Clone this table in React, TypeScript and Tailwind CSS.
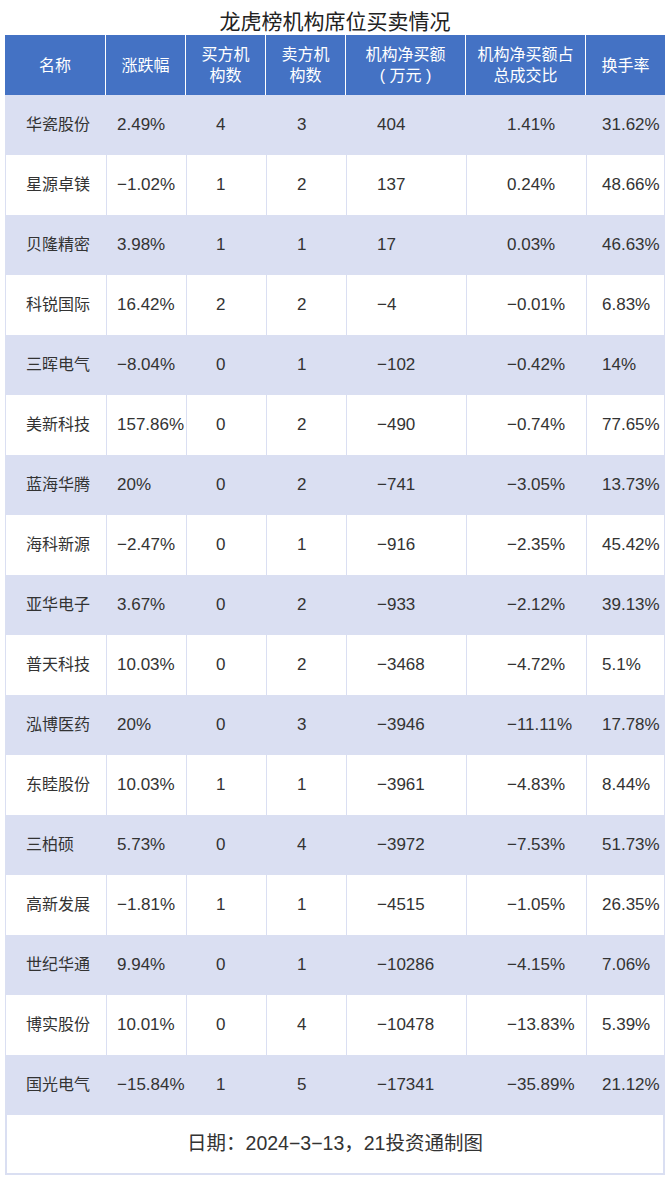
const rows: [string, string, string, string, string, string, string][] = [
  ["华瓷股份", "2.49%", "4", "3", "404", "1.41%", "31.62%"],
  ["星源卓镁", "−1.02%", "1", "2", "137", "0.24%", "48.66%"],
  ["贝隆精密", "3.98%", "1", "1", "17", "0.03%", "46.63%"],
  ["科锐国际", "16.42%", "2", "2", "−4", "−0.01%", "6.83%"],
  ["三晖电气", "−8.04%", "0", "1", "−102", "−0.42%", "14%"],
  ["美新科技", "157.86%", "0", "2", "−490", "−0.74%", "77.65%"],
  ["蓝海华腾", "20%", "0", "2", "−741", "−3.05%", "13.73%"],
  ["海科新源", "−2.47%", "0", "1", "−916", "−2.35%", "45.42%"],
  ["亚华电子", "3.67%", "0", "2", "−933", "−2.12%", "39.13%"],
  ["普天科技", "10.03%", "0", "2", "−3468", "−4.72%", "5.1%"],
  ["泓博医药", "20%", "0", "3", "−3946", "−11.11%", "17.78%"],
  ["东睦股份", "10.03%", "1", "1", "−3961", "−4.83%", "8.44%"],
  ["三柏硕", "5.73%", "0", "4", "−3972", "−7.53%", "51.73%"],
  ["高新发展", "−1.81%", "1", "1", "−4515", "−1.05%", "26.35%"],
  ["世纪华通", "9.94%", "0", "1", "−10286", "−4.15%", "7.06%"],
  ["博实股份", "10.01%", "0", "4", "−10478", "−13.83%", "5.39%"],
  ["国光电气", "−15.84%", "1", "5", "−17341", "−35.89%", "21.12%"],
];

// left padding of each body column, taken from the picture
const pads = ["pl-[20px]", "pl-[10px]", "pl-[29px]", "pl-[30px]", "pl-[30px]", "pl-[40px]", "pl-[15px]"];

const heads: string[][] = [
  ["名称"],
  ["涨跌幅"],
  ["买方机", "构数"],
  ["卖方机", "构数"],
  ["机构净买额", "( 万元 )"],
  ["机构净买额占", "总成交比"],
  ["换手率"],
];

const grid = "grid grid-cols-[100px_80px_80px_80px_120px_120px_80px]";

export default function App() {
  return (
    <div
      className="w-[670px] h-[1180px] bg-white text-[#333]"
      style={{ fontFamily: '"Liberation Sans", "Noto Sans CJK SC", sans-serif' }}
    >
      <h1 className="h-[35px] flex items-center justify-center text-[21px] text-[#222] pt-[8px] font-normal">
        龙虎榜机构席位买卖情况
      </h1>
      <div className="mx-[5px] w-[660px]">
        <div className={`${grid} h-[60px] bg-[#4472c4] text-white text-[16px] leading-[21px]`}>
          {heads.map((h, i) => (
            <div
              key={i}
              className={`flex flex-col items-center justify-center text-center ${i > 0 ? "border-l border-white" : ""}`}
            >
              {h.map((l) => (
                <span key={l} className="whitespace-pre">{l}</span>
              ))}
            </div>
          ))}
        </div>
        <div className="border-x border-[#dadff2]">
          {rows.map((r, ri) => (
            <div key={ri} className={`${grid} h-[60px] ${ri % 2 === 0 ? "bg-[#dadff2]" : "bg-white"}`}>
              {r.map((c, ci) => (
                <div
                  key={ci}
                  className={`flex items-center whitespace-nowrap ${pads[ci]} ${ci > 0 ? "border-l border-[#dadff2] text-[17px]" : "text-[16px]"}`}
                >
                  {c}
                </div>
              ))}
            </div>
          ))}
        </div>
        <div className="h-[60px] border-2 border-t-0 border-[#dadff2] flex items-center justify-center text-[19.5px] text-[#333]">
          日期：2024−3−13，21投资通制图
        </div>
      </div>
    </div>
  );
}
